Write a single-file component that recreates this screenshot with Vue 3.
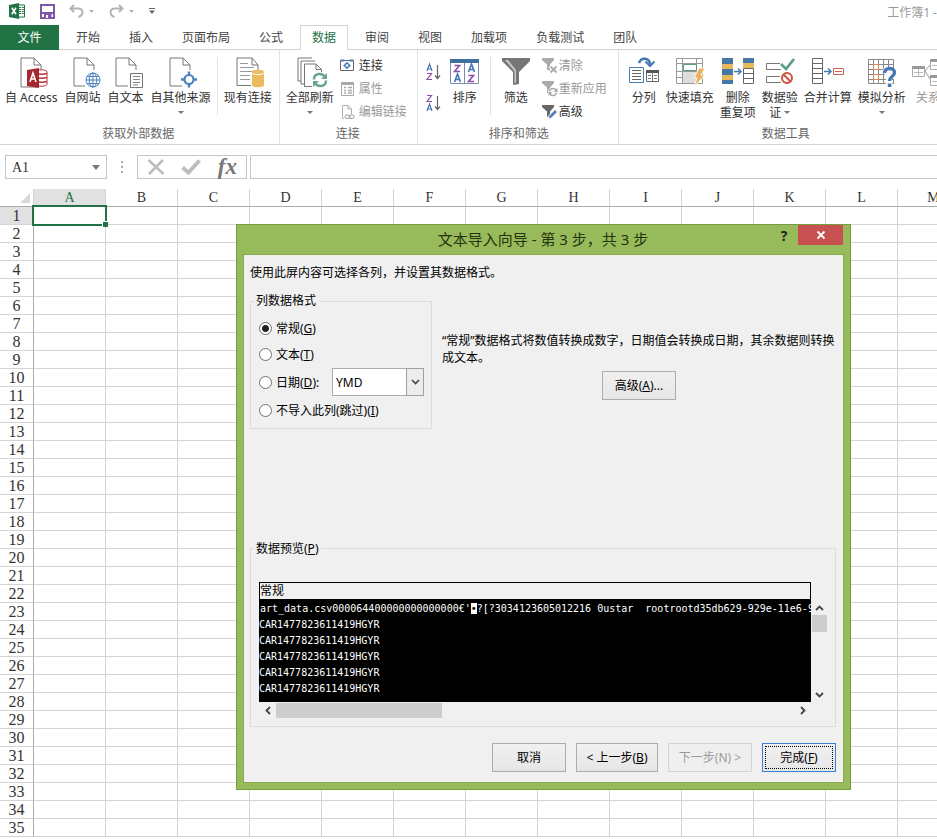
<script setup>
import { ref } from 'vue'

const tabs = ['开始', '插入', '页面布局', '公式', '数据', '审阅', '视图', '加载项', '负载测试', '团队']
const activeTab = ref('数据')
const columns = 'ABCDEFGHIJKLM'.split('')
const rows = Array.from({ length: 35 }, (_, i) => i + 1)
const format = ref('general')
const dateOrder = ref('YMD')
const cellName = ref('A1')
const formula = ref('')
const previewRows = Array.from({ length: 5 }, () => 'CAR1477823611419HGYR')
</script>

<template>
  <div class="app">
    <header class="titlebar">
      <svg class="logo" width="16" height="16" viewBox="0 0 16 16">
        <path d="M9 2h6.500v12H9z" fill="#fff" stroke="#217346" />
        <path d="M10 4.500h2M10 6.500h2M10 8.500h2M10 10.500h2M12.800 4.500h2M12.800 6.500h2M12.800 8.500h2M12.800 10.500h2" stroke="#217346" />
        <path d="M0 2l10-2v16L0 14z" fill="#217346" />
        <path d="M2.800 4.800l4.200 6.400M7 4.800l-4.200 6.400" stroke="#fff" stroke-width="1.600" />
      </svg>
      <button class="qa save" aria-label="保存">
        <svg width="15" height="15" viewBox="0 0 15 15">
          <path d="M1 1h13v13H1z" fill="#fff" stroke="#7e57a6" stroke-width="2" />
          <path d="M2 8h11v2H2z" fill="#7e57a6" /><path d="M4 9h7.500v5H4z" fill="#7e57a6" /><path d="M6 11h2v3H6z" fill="#fff" />
        </svg>
      </button>
      <button class="qa undo" aria-label="撤消">
        <svg width="15" height="14" viewBox="0 0 15 14"><path d="M5 1L1.500 4.500 5 8M2 4.500h7c3 0 4.500 1.700 4.500 4 0 2-1.500 3.500-4 4.500" fill="none" stroke="#b4b4b4" stroke-width="2" /></svg>
        <svg class="caret" width="5" height="3" viewBox="0 0 5 3"><path d="M0 0h5L2.500 3z" fill="#b4b4b4" /></svg>
      </button>
      <button class="qa redo" aria-label="恢复">
        <svg width="15" height="14" viewBox="0 0 15 14"><path d="M10 1l3.500 3.500L10 8M13 4.500H6c-3 0-4.500 1.700-4.500 4 0 2 1.500 3.500 4 4.500" fill="none" stroke="#b4b4b4" stroke-width="2" /></svg>
        <svg class="caret" width="5" height="3" viewBox="0 0 5 3"><path d="M0 0h5L2.500 3z" fill="#b4b4b4" /></svg>
      </button>
      <button class="qa" aria-label="自定义快速访问工具栏">
        <svg width="6" height="6" viewBox="0 0 6 6"><path d="M0 .5h6" stroke="#666" /><path d="M0 2.500h6L3 6z" fill="#666" /></svg>
      </button>
      <span class="doc">工作簿1 -</span>
    </header>

    <nav class="tabs">
      <button class="file">文件</button>
      <button v-for="t in tabs" :key="t" class="tab" :class="{ active: t === activeTab }" @click="activeTab = t">{{ t }}</button>
    </nav>

    <section class="ribbon">
      <div class="group external">
        <div class="tools">
          <button class="big">
            <svg width="32" height="32" viewBox="-1 0 32 32">
              <path d="M21 30H5V1h13l7 7v4M18 1v7h7" fill="none" stroke="#777" />
              <path d="M19 15c0-3 12-3 12 0v12c0 3-12 3-12 0z" fill="#fff" stroke="#b5343d" />
              <path d="M21 16.500c2 1 7 1 10 0M21 20.500c2 1 7 1 10 0M21 24.500c2 1 7 1 10 0" fill="none" stroke="#b5343d" stroke-width="1.500" />
              <path d="M11 13l12-2v20l-12-2z" fill="#a4262f" />
              <path d="M14 25l3-9 3 9M15 22h4" fill="none" stroke="#fff" stroke-width="1.600" />
            </svg>
            <span>自 Access</span>
          </button>
          <button class="big">
            <svg width="32" height="32" viewBox="-2 0 32 32">
              <path d="M16 29H5V1h13l7 7v5M18 1v7h7" fill="none" stroke="#777" />
              <circle cx="24" cy="23" r="7" fill="#fff" stroke="#4a80bc" />
              <path d="M17 23h14M24 16v14M18 19.500h12M18 26.500h12" stroke="#4a80bc" /><ellipse cx="24" cy="23" rx="3.800" ry="7" fill="none" stroke="#4a80bc" />
            </svg>
            <span>自网站</span>
          </button>
          <button class="big">
            <svg width="32" height="32" viewBox="-1 0 32 32">
              <path d="M17 29H5V1h13l7 7v5M18 1v7h7" fill="none" stroke="#777" />
              <path d="M19.500 16.500h12v14h-12z" fill="#fff" stroke="#777" /><path d="M22 19.500h7M22 22.500h7M22 25.500h7M22 28h5" stroke="#888" />
            </svg>
            <span>自文本</span>
          </button>
          <button class="big">
            <svg width="32" height="32" viewBox="0 0 32 32">
              <path d="M17 29H5V1h13l7 7v5M18 1v7h7" fill="none" stroke="#777" />
              <path d="M24 14.500v16M16 22.500h16" stroke="#4a80bc" stroke-width="2.400" /><circle cx="24" cy="22.500" r="4.500" fill="#fff" stroke="#4a80bc" stroke-width="2.200" />
            </svg>
            <span>自其他来源</span><i class="arrow"></i>
          </button>
          <div class="rule"></div>
          <button class="big">
            <svg width="32" height="32" viewBox="0 0 32 32">
              <path d="M19 28.500H5V1h15l6 7v5M20 1v7h6" fill="none" stroke="#777" />
              <path d="M8 6.500h8M8 10.500h14M8 14.500h12M8 18.500h10M8 22.500h10" stroke="#999" />
              <path d="M20 15c0-3 12-3 12 0v13c0 3-12 3-12 0z" fill="#eabb5f" /><path d="M20 16c1 2 11 2 12 0" fill="none" stroke="#fff" />
            </svg>
            <span>现有连接</span>
          </button>
        </div>
        <div class="caption">获取外部数据</div>
      </div>

      <div class="group connections">
        <div class="tools">
          <button class="big">
            <svg width="32" height="32" viewBox="-2 0 32 32">
              <path d="M5 24H2V1h14M8 27H5V4h14" fill="none" stroke="#777" />
              <path d="M16 29.500H8.500V7H20l5.500 5.500V15M20 7v5.500h5.500" fill="#fff" stroke="#777" />
              <path d="M18 22.500c0-7 9-7 11-2M30 23.500c0 7-9 7-11 2" fill="none" stroke="#69a58a" stroke-width="2.500" /><path d="M31 16v6h-6zM17 30v-6h6z" fill="#69a58a" />
            </svg>
            <span>全部刷新</span><i class="arrow"></i>
          </button>
          <div class="stack">
            <button class="small">
              <svg width="15" height="16" viewBox="0 0 15 16"><path d="M.5 2.500h13v10H.500z" fill="#fff" stroke="#666" /><path d="M.5 2.500h4M9.500 2.500h4" stroke="#4a80bc" stroke-width="2" /><circle cx="7" cy="7.500" r="2" fill="#fff" stroke="#4a80bc" stroke-width="1.500" /><path d="M7 4v1.500M7 9.500V11M3.500 7.500H5M9 7.500h1.500" stroke="#4a80bc" stroke-width="1.500" /></svg>
              <span>连接</span>
            </button>
            <button class="small" disabled>
              <svg width="15" height="16" viewBox="0 0 15 16"><path d="M1.500 1.500h12v13h-12z" fill="none" stroke="#aaa" /><path d="M1.500 3h12" stroke="#aaa" stroke-width="2" /><path d="M4 6.500h2M4 9.500h2M4 12h2M8 6.500h4M8 9.500h4M8 12h4" stroke="#aaa" stroke-width="1.500" /></svg>
              <span>属性</span>
            </button>
            <button class="small" disabled>
              <svg width="15" height="16" viewBox="0 0 15 16"><path d="M4 14.500H2.500v-13H8l3.500 3.500v5M8 1.500V5h3.500" fill="none" stroke="#b0b0b0" /><rect x="5" y="11" width="5" height="3.500" rx="1.700" fill="#fff" stroke="#999" /><rect x="9" y="11" width="5" height="3.500" rx="1.700" fill="none" stroke="#999" /></svg>
              <span>编辑链接</span>
            </button>
          </div>
        </div>
        <div class="caption">连接</div>
      </div>

      <div class="group sorting">
        <div class="tools">
          <div class="orders">
            <button aria-label="升序">
              <svg width="16" height="18" viewBox="0 0 16 18"><path d="M1 8l2.500-7L6 8M2 6h3" fill="none" stroke="#4472b0" stroke-width="1.200" /><path d="M1 10.500h4.500L1 16.500h5" fill="none" stroke="#8c50a8" stroke-width="1.200" /><path d="M11.500 2v13M9 12.500l2.500 3 2.500-3" fill="none" stroke="#666" stroke-width="1.200" /></svg>
            </button>
            <button aria-label="降序">
              <svg width="16" height="18" viewBox="0 0 16 18"><path d="M1 1.500h4.500L1 7.500h5" fill="none" stroke="#8c50a8" stroke-width="1.200" /><path d="M1 17l2.500-7L6 17M2 15h3" fill="none" stroke="#4472b0" stroke-width="1.200" /><path d="M11.500 2v13M9 12.500l2.500 3 2.500-3" fill="none" stroke="#666" stroke-width="1.200" /></svg>
            </button>
          </div>
          <button class="big">
            <svg width="30" height="32" viewBox="0 0 30 32">
              <path d="M.5 2.500h28v24H.500z" fill="#fff" stroke="#7890b0" /><path d="M0 2h29v4H0z" fill="#3f6f9f" /><path d="M14.500 6v20" stroke="#7890b0" />
              <path d="M4.500 8.500h5l-5 6h5.500M18.500 18.500h5l-5 6H24" fill="none" stroke="#8c50a8" stroke-width="1.600" /><path d="M4.500 25l3-8 3 8M5.500 22.500h4M18.500 15l3-8 3 8M19.500 12.500h4" fill="none" stroke="#3f74b5" stroke-width="1.600" />
            </svg>
            <span>排序</span>
          </button>
          <div class="rule"></div>
          <button class="big">
            <svg width="30" height="32" viewBox="0 0 30 32"><path d="M1 1h28v3L18 15v12l-6 1V15L1 4z" fill="#767676" /><path d="M4 3l9.500 11v12l1.500-.5V13L7 3z" fill="#c8c8c8" /></svg>
            <span>筛选</span>
          </button>
          <div class="stack">
            <button class="small" disabled>
              <svg width="16" height="16" viewBox="0 0 16 16"><path d="M0 0h12v2L8 6.500V13l-3-1.500V6.500L0 2z" fill="#aaa" /><path d="M8 8l7 7M15 8l-7 7" stroke="#fff" stroke-width="4" /><path d="M8.500 8.500l6 6M14.500 8.500l-6 6" stroke="#aaa" stroke-width="1.800" /></svg>
              <span>清除</span>
            </button>
            <button class="small" disabled>
              <svg width="16" height="16" viewBox="0 0 16 16"><path d="M0 0h12v2L8 6.500V13l-3-1.500V6.500L0 2z" fill="#aaa" /><circle cx="11" cy="11" r="5" fill="#fff" /><path d="M7.500 10.500c.5-4 6-4 7-.5M14.500 11.500c-.5 4-6 4-7 .5" fill="none" stroke="#aaa" stroke-width="1.400" /><path d="M15.500 7v4h-4zM6.500 15v-4h4z" fill="#aaa" /></svg>
              <span>重新应用</span>
            </button>
            <button class="small">
              <svg width="16" height="16" viewBox="0 0 16 16"><path d="M0 1h12v2L8 7.500V14l-3-1.500V7.500L0 3z" fill="#686868" /><path d="M6 15l1-3.500 6-6 2.500 2.500-6 6z" fill="#4a80bc" stroke="#fff" /></svg>
              <span>高级</span>
            </button>
          </div>
        </div>
        <div class="caption">排序和筛选</div>
      </div>

      <div class="group datatools">
        <div class="tools">
          <button class="big">
            <svg width="32" height="32" viewBox="0 0 32 32">
              <path d="M1.500 10.500h14v15h-14z" fill="#fff" stroke="#4a80bc" /><path d="M4 13.500h9M4 16.500h9M4 19.500h9M4 22.500h9" stroke="#666" />
              <path d="M18.500 13.500h12v11h-12z" fill="#fff" stroke="#666" /><path d="M18 14.500h13" stroke="#555" stroke-width="3" /><path d="M24.500 15v9M20 18.500h3M26 18.500h3M20 21.500h3M26 21.500h3" stroke="#777" />
              <path d="M11 6c2-6 11-6 11 2" fill="none" stroke="#4479b5" stroke-width="2.500" /><path d="M17.500 4.500l4.500 4.500 4.500-4.500" fill="none" stroke="#4479b5" stroke-width="2" />
            </svg>
            <span>分列</span>
          </button>
          <button class="big">
            <svg width="32" height="32" viewBox="0 0 32 32">
              <path d="M2.500 1.500h26v25h-26zM8.500 1.500v25M22.500 1.500v25M2.500 6.500h26M2.500 14.500h26M2.500 20.500h26" fill="none" stroke="#999" />
              <path d="M9 15h13v11H9z" fill="#ddd" /><path d="M9.500 7.500h13v6h-13z" fill="#fff" stroke="#5a9c7c" /><path d="M25 11h6l-4 7h4l-11 12 3-9h-3z" fill="#edb155" stroke="#fff" />
            </svg>
            <span>快速填充</span>
          </button>
          <button class="big">
            <svg width="34" height="32" viewBox="0 0 34 32">
              <path d="M1 1h11v26H1zM22 1h11v10H22z" fill="#4677a5" /><path d="M1 7h11v5H1zM1 18h11v5H1zM22 6h11v5H22z" fill="#e8b85b" />
              <path d="M22.500 11.500h10v15h-10zM22.500 16.500h10M22.500 21.500h10" fill="#fff" stroke="#666" /><path d="M13 14.500h7M17 11.500l3 3-3 3" fill="none" stroke="#4479b5" stroke-width="1.500" />
            </svg>
            <span>删除<br>重复项</span>
          </button>
          <button class="big">
            <svg width="32" height="32" viewBox="0 0 32 32">
              <path d="M16 6.500H2.500v6H17M16 19.500H2.500v6H17" fill="none" stroke="#777" /><path d="M17 7l5 5 8-10" fill="none" stroke="#5fa083" stroke-width="2.800" />
              <circle cx="23" cy="21" r="5" fill="#fff" stroke="#cf5340" stroke-width="2" /><path d="M19.500 17.500l7 7" stroke="#cf5340" stroke-width="2" />
            </svg>
            <span>数据验<br>证 <i class="arrow inline"></i></span>
          </button>
          <button class="big">
            <svg width="34" height="32" viewBox="0 0 34 32">
              <path d="M1.500 1.500h10v25h-10zM1.500 6.500h10M1.500 11.500h10M1.500 16.500h10M1.500 21.500h10" fill="none" stroke="#666" />
              <path d="M13 14.500h7M17 11.500l3 3-3 3" fill="none" stroke="#4479b5" stroke-width="1.500" /><path d="M22.500 11.500h10v6h-10zM24 14.500h7" fill="none" stroke="#cf6050" />
            </svg>
            <span>合并计算</span>
          </button>
          <button class="big">
            <svg width="32" height="32" viewBox="0 0 32 32">
              <path d="M2.500 2.500h25v24h-25zM7.500 2.500v24M12.500 2.500v24M17.500 2.500v24M22.500 2.500v24M2.500 7.500h25M2.500 12.500h25M2.500 17.500h25M2.500 22.500h25" fill="none" stroke="#888" />
              <path d="M7.500 7.500h5v5h-5zM7.500 17.500h5v5h-5z" fill="#fff" stroke="#e08550" /><path d="M17 12h12v10h-3v8h-6v-8z" fill="#fff" /><path d="M18.500 16c0-6 10-6 10-.5 0 4-5 4-5 8.500" fill="none" stroke="#4479b5" stroke-width="3.400" /><path d="M21.800 26.500h3.600v3.500h-3.600z" fill="#4479b5" />
            </svg>
            <span>模拟分析</span><i class="arrow"></i>
          </button>
          <button class="big" disabled>
            <svg width="32" height="32" viewBox="0 0 32 32">
              <path d="M.5 9.500h12v10H.500zM18.500 2.500h13v10h-13zM18.500 18.500h13v10h-13z" fill="#fff" stroke="#aaa" /><path d="M0 10.500h13M18 3.500h14M18 19.500h14" stroke="#999" stroke-width="3" />
              <path d="M2 15.500h9M6.500 12v7M20 8.500h10M20 24.500h10" stroke="#bbb" /><path d="M13 14l5-6M13 14l5 8" stroke="#999" />
            </svg>
            <span>关系</span>
          </button>
        </div>
        <div class="caption">数据工具</div>
      </div>
    </section>

    <section class="formulabar">
      <div class="namebox">
        <input v-model="cellName" aria-label="名称框">
        <button aria-label="名称列表"><svg width="8" height="5" viewBox="0 0 8 5"><path d="M0 0h8L4 5z" fill="#777" /></svg></button>
      </div>
      <svg class="grip" width="2" height="12" viewBox="0 0 2 12"><path d="M0 0h2v2H0zM0 5h2v2H0zM0 10h2v2H0z" fill="#aaa" /></svg>
      <div class="actions">
        <button aria-label="取消输入"><svg width="18" height="18" viewBox="0 0 18 18"><path d="M1.500 2l15 14M16 2L2 16" stroke="#bdbdbd" stroke-width="2.600" /></svg></button>
        <button aria-label="输入"><svg width="20" height="18" viewBox="0 0 20 18"><path d="M1.500 9.500l6 5L18.500 2.500" fill="none" stroke="#bdbdbd" stroke-width="4" /></svg></button>
        <button class="fx" aria-label="插入函数">fx</button>
      </div>
      <input v-model="formula" class="formula" aria-label="编辑栏">
    </section>

    <main class="sheet">
      <table>
        <thead>
          <tr>
            <th class="corner"><svg width="10" height="10" viewBox="0 0 10 10"><path d="M10 0v10H0z" fill="#d8d8d8" /></svg></th>
            <th v-for="c in columns" :key="c" :class="{ current: c === 'A' }">{{ c }}</th>
          </tr>
        </thead>
        <tbody>
          <tr v-for="r in rows" :key="r">
            <th :class="{ current: r === 1 }">{{ r }}</th>
            <td v-for="c in columns" :key="c" :class="{ selected: r === 1 && c === 'A' }"></td>
          </tr>
        </tbody>
      </table>
    </main>

    <div class="dialog" role="dialog" aria-labelledby="wizard-title">
      <div class="dialog-title">
        <h1 id="wizard-title">文本导入向导 - 第 3 步，共 3 步</h1>
        <button class="help" aria-label="帮助">?</button>
        <button class="close" aria-label="关闭"><svg width="8" height="8" viewBox="0 0 8 8"><path d="M.5 .5l7 7M7.500 .5l-7 7" stroke="#fff" stroke-width="1.800" /></svg></button>
      </div>
      <form class="dialog-body" @submit.prevent>
        <p class="intro">使用此屏内容可选择各列，并设置其数据格式。</p>
        <div class="settings">
          <fieldset class="formats">
            <legend>列数据格式</legend>
            <div class="option"><label><input v-model="format" type="radio" name="format" value="general">常规(<u>G</u>)</label></div>
            <div class="option"><label><input v-model="format" type="radio" name="format" value="text">文本(<u>T</u>)</label></div>
            <div class="option date">
              <label><input v-model="format" type="radio" name="format" value="date">日期(<u>D</u>):</label>
              <div class="combo">
                <select v-model="dateOrder" aria-label="日期顺序"><option>YMD</option><option>MDY</option><option>DMY</option></select>
                <span class="drop"><svg width="9" height="6" viewBox="0 0 9 6"><path d="M1 1l3.500 3.500L8 1" fill="none" stroke="#444" stroke-width="1.600" /></svg></span>
              </div>
            </div>
            <div class="option"><label><input v-model="format" type="radio" name="format" value="skip">不导入此列(跳过)(<u>I</u>)</label></div>
          </fieldset>
          <div class="explain">
            <p>“常规”数据格式将数值转换成数字，日期值会转换成日期，其余数据则转换成文本。</p>
            <button class="btn" type="button">高级(<u>A</u>)...</button>
          </div>
        </div>
        <fieldset class="preview">
          <legend>数据预览(<u>P</u>)</legend>
          <div class="viewer">
            <div class="data">
              <table>
                <thead><tr><th>常规</th></tr></thead>
                <tbody>
                  <tr><td class="first">art_data.csv000064400000000000000€'<span class="ctrl">•</span>?[?3034123605012216 0ustar&nbsp; rootrootd35db629-929e-11e6-9</td></tr>
                  <tr v-for="(line, i) in previewRows" :key="i"><td>{{ line }}</td></tr>
                </tbody>
              </table>
            </div>
            <div class="vscroll">
              <button type="button" aria-label="向上滚动"><svg width="9" height="6" viewBox="0 0 9 6"><path d="M1 5l3.500-3.500L8 5" fill="none" stroke="#444" stroke-width="1.800" /></svg></button>
              <div class="thumb"></div>
              <button type="button" class="end" aria-label="向下滚动"><svg width="9" height="6" viewBox="0 0 9 6"><path d="M1 1l3.500 3.500L8 1" fill="none" stroke="#444" stroke-width="1.800" /></svg></button>
            </div>
            <div class="hscroll">
              <button type="button" aria-label="向左滚动"><svg width="6" height="9" viewBox="0 0 6 9"><path d="M5 1L1.500 4.500 5 8" fill="none" stroke="#444" stroke-width="1.800" /></svg></button>
              <div class="thumb"></div>
              <button type="button" class="end" aria-label="向右滚动"><svg width="6" height="9" viewBox="0 0 6 9"><path d="M1 1l3.500 3.500L1 8" fill="none" stroke="#444" stroke-width="1.800" /></svg></button>
            </div>
          </div>
        </fieldset>
        <div class="buttons">
          <button class="btn" type="button">取消</button>
          <button class="btn back" type="button">&lt; 上一步(<u>B</u>)</button>
          <button class="btn next" type="button" disabled>下一步(N) &gt;</button>
          <button class="btn finish" type="submit"><span>完成(<u>F</u>)</span></button>
        </div>
      </form>
    </div>
  </div>
</template>

<style>
body { overflow: hidden; background: #fff; }
</style>

<style scoped>
* { box-sizing: border-box; }
.app {
  position: relative; display: flex; flex-direction: column; height: 100vh; overflow: hidden;
  font: 12px/15px "Noto Sans", "Noto Sans CJK SC", sans-serif; color: #333; background: #fff;
}
button { font: inherit; color: inherit; background: none; border: 0; padding: 0; margin: 0; }
svg { display: block; flex: none; overflow: visible; }

.titlebar { display: flex; align-items: center; height: 25px; flex: none; padding-left: 9px; padding-bottom: 3px; }
.logo { margin-right: 15px; }
.qa { display: flex; align-items: center; gap: 5px; }
.save { margin-right: 14px; }
.undo, .redo { margin-right: 15px; }
.doc { margin-left: auto; padding-top: 2px; color: #999; white-space: nowrap; }

.tabs { display: flex; gap: 5px; height: 25px; flex: none; border-bottom: 1px solid #d4d4d4; }
.tab { padding: 0 12px; height: 24px; color: #444; white-space: nowrap; }
.file { width: 59px; height: 25px; flex: none; background: #217346; color: #fff; }
.tab.active { height: 25px; color: #217346; background: #fff; box-shadow: inset 1px 1px #d4d4d4, inset -1px 0 #d4d4d4; }

.ribbon { display: flex; height: 95px; flex: none; border-bottom: 1px solid #d4d4d4; overflow: hidden; }
.group { display: flex; flex-direction: column; flex: none; padding: 6px 4px 2px 3px; border-right: 1px solid #e2e2e2; }
.tools { display: flex; flex: 1; }
.caption { text-align: center; line-height: 16px; color: #666; }
.big { display: flex; flex-direction: column; align-items: center; align-self: flex-start; padding: 1px 3px 0; min-width: 36px; white-space: nowrap; }
.big > span { margin-top: 1px; }
.big:disabled, .small:disabled { color: #9a9a9a; }
.arrow { width: 0; height: 0; margin-top: 6px; border: 3px solid transparent; border-top-color: #777; border-bottom: 0; }
.arrow.inline { display: inline-block; margin: 0 0 3px; }
.rule { width: 1px; height: 58px; margin: 1px 2px 0; background: #e2e2e2; }
.stack { display: flex; flex-direction: column; padding-right: 3px; margin-top: -1px; }
.small { display: flex; align-items: center; gap: 4px; height: 23px; padding: 0 3px; white-space: nowrap; margin-top: -1px; margin-bottom: 1px; }
.external { padding-left: 2px; }
.external .tools { gap: 1px; }
.sorting { padding-left: 7px; padding-right: 5px; }
.sorting .rule { margin: 1px 7px 0; }
.sorting .small { gap: 1px; }
.orders { display: flex; flex-direction: column; gap: 13px; padding: 7px 5px 0 1px; }
.sorting .stack { padding-left: 5px; }
.datatools { padding-left: 6px; }

.formulabar { display: flex; align-items: center; flex: none; height: 44px; padding-left: 5px; }
.namebox { display: flex; width: 102px; height: 24px; border: 1px solid #c6c6c6; }
.namebox input { flex: 1; min-width: 0; border: 0; outline: 0; padding: 2px 6px 0; font: 14px "Liberation Serif", serif; color: #333; }
.namebox button { width: 20px; display: flex; align-items: center; justify-content: center; }
.grip { margin: 0 14px; }
.actions { display: flex; align-items: center; justify-content: space-between; width: 110px; height: 24px; padding: 0 9px; border: 1px solid #c6c6c6; }
.fx { font: italic bold 23px/22px "Liberation Serif", serif; color: #777; }
.formula { flex: 1; min-width: 0; height: 24px; margin-left: 3px; border: 1px solid #c6c6c6; border-right: 0; outline: 0; }

.sheet { flex: 1; min-height: 0; overflow: hidden; }
.sheet table { width: max-content; table-layout: fixed; border-collapse: separate; border-spacing: 0; }
.sheet th, .sheet td { width: 72px; min-width: 72px; height: 18px; padding: 0; border-right: 1px solid #d4d4d4; border-bottom: 1px solid #d4d4d4; }
.sheet th { font: 14px/17px "Liberation Serif", serif; color: #333; text-align: center; }
.sheet thead th { border-bottom-color: #ababab; padding-top: 1px; line-height: 16px; }
.sheet tbody th, .sheet .corner { width: 34px; min-width: 34px; border-right-color: #ababab; }
.sheet tbody th { font: 16px/16px "Liberation Serif", serif; padding-top: 1px; }
.sheet .corner { border-right-color: #d4d4d4; }
.corner svg { margin: 0 3px 0 auto; }
.sheet th.current { background: #e1e1e1; color: #217346; }
.sheet tbody th.current { color: #333; }
.selected { position: relative; }
.selected::before { content: ""; position: absolute; inset: -2px; border: 2px solid #217346; }
.selected::after { content: ""; position: absolute; right: -3px; bottom: -3px; width: 5px; height: 5px; background: #217346; box-shadow: -1px -1px #fff; }

.dialog {
  position: absolute; left: 236px; top: 224px; width: 615px; height: 566px; display: flex; flex-direction: column;
  padding: 0 7px 7px; background: #97bb5a; border: 1px solid #779c41; color: #000;
}
.dialog-title { display: flex; height: 30px; flex: none; }
.dialog-title h1 { flex: 1; margin: 0; padding-left: 72px; text-align: center; font-size: 15px; font-weight: 400; line-height: 28px; color: #26330f; }
.help { width: 28px; height: 20px; font: bold 14px "Open Sans", sans-serif; color: #222; }
.close { display: flex; align-items: center; justify-content: center; width: 45px; height: 20px; background: #c75050; }
.dialog-body { flex: 1; display: flex; flex-direction: column; background: #f0f0f0; padding: 9px 7px 10px 6px; box-shadow: 0 0 0 1px #86ab4b; }
p { margin: 0; }
.intro { line-height: 18px; margin-bottom: 11px; }
.settings { display: flex; gap: 10px; }
fieldset { margin: 0; min-width: 0; border: 1px solid #dcdcdc; padding: 0; }
legend { margin-left: 3px; padding: 0 3px 0 2px; line-height: 16px; }
.formats { width: 182px; padding: 0 7px 6px 8px; }
.formats legend { margin-left: -5px; margin-bottom: 7px; }
.option { display: flex; align-items: center; height: 24px; margin-top: 2px; }
.option.date { height: 28px; }
.option:first-of-type { margin-top: 0; }
.option label { display: flex; align-items: center; white-space: nowrap; }
.option input { appearance: none; width: 13px; height: 13px; margin: 0 4px 0 0; border: 1px solid #707070; border-radius: 50%; background: #fff; }
.option input:checked { background: radial-gradient(circle, #222 0 3px, #fff 4px); }
.combo { position: relative; width: 92px; height: 28px; margin-left: auto; }
.combo select { appearance: none; width: 100%; height: 100%; border: 1px solid #acacac; border-radius: 0; background: #fff; padding: 0 3px; font: inherit; color: #000; }
.drop { position: absolute; right: 0; top: 0; width: 18px; height: 28px; display: flex; align-items: center; justify-content: center; background: #ececec; border: 1px solid #a0a0a0; pointer-events: none; }
.explain { flex: 1; display: flex; flex-direction: column; align-items: center; gap: 5px; padding-top: 39px; }
.explain p { line-height: 17px; }
.btn { min-width: 74px; height: 29px; padding: 0 8px; border: 1px solid #acacac; background: linear-gradient(#f0f0f0, #e6e6e6); white-space: nowrap; }
.preview { margin-top: auto; padding: 0 7px 7px 8px; }
.preview legend { margin-left: -5px; margin-bottom: 25px; padding-top: 1px; }
.viewer { display: grid; grid-template-columns: 1fr 17px; grid-template-rows: 120px 17px; }
.data { overflow: hidden; background: #000; }
.data table { width: 100%; table-layout: fixed; border-spacing: 0; }
.data thead { background: #f0f0f0; }
.data th { height: 19px; padding: 0; text-align: left; font-weight: 400; line-height: 16px; border: 1px solid #000; border-bottom: 2px solid #000; }
.data td { height: 16px; padding: 0; font: 10px/16px "DejaVu Sans Mono", monospace; color: #fff; white-space: nowrap; overflow: hidden; }
.data td.first { padding-left: 1px; }
.ctrl { background: #fff; color: #000; }
.vscroll { display: flex; flex-direction: column; align-items: center; padding-top: 18px; }
.vscroll .thumb { width: 15px; height: 17px; background: #cdcdcd; }
.vscroll button { height: 15px; }
.hscroll { display: flex; align-items: center; }
.hscroll button { width: 17px; display: flex; justify-content: center; }
.hscroll .thumb { width: 30%; height: 15px; background: #cdcdcd; }
.end { margin-top: auto; margin-left: auto; }
.vscroll .end { margin-left: 0; }
.hscroll .end { margin-top: 0; }
.buttons { display: flex; justify-content: flex-end; gap: 10px; margin-top: 16px; }
.back { min-width: 82px; }
.next { min-width: 84px; padding: 0 7px; }
.next:disabled { color: #9a9a9a; background: #efefef; border-color: #d4d4d4; }
.finish { padding: 2px; border-color: #3c7fd0; }
.finish span { display: flex; align-items: center; justify-content: center; height: 100%; border: 1px dotted #000; }
</style>
